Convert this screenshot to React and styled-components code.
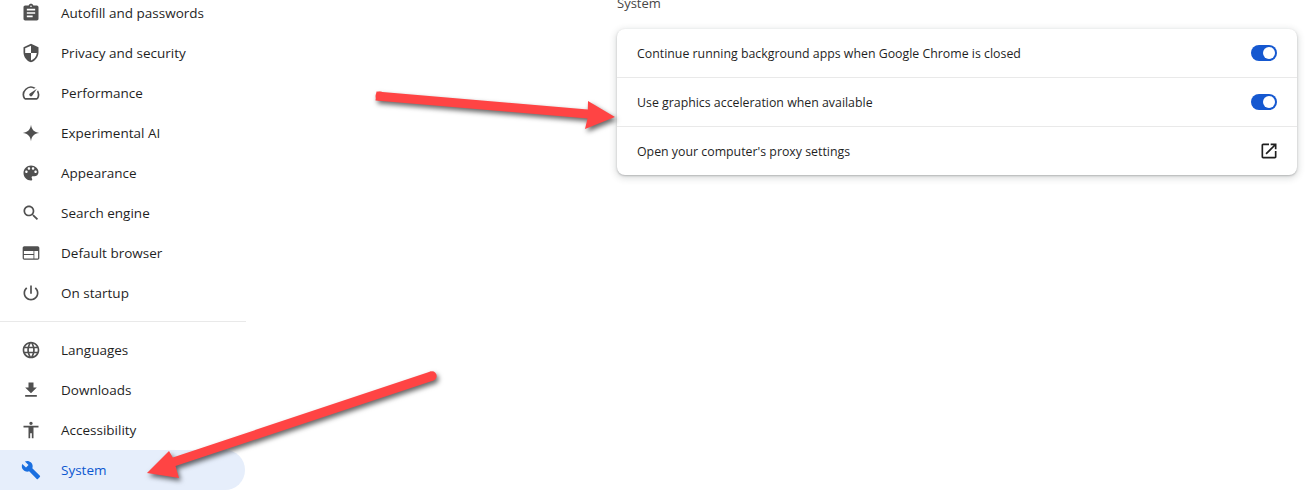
import styled, { createGlobalStyle } from "styled-components";

const GlobalStyle = createGlobalStyle`
	html,
	body {
		margin: 0;
		background: #fff;
	}
	body {
		font-family: "Open Sans", "Noto Sans", sans-serif;
		font-size: 13px;
		color: #1f1f1f;
	}
`;

const icons = {
	autofill:
		"M19 3h-4.18C14.4 1.84 13.3 1 12 1c-1.3 0-2.4.84-2.82 2H5c-1.1 0-2 .9-2 2v14c0 1.1.9 2 2 2h14c1.1 0 2-.9 2-2V5c0-1.1-.9-2-2-2zm-7 0c.55 0 1 .45 1 1s-.45 1-1 1-1-.45-1-1 .45-1 1-1zm2 14H7v-2h7v2zm3-4H7v-2h10v2zm0-4H7V7h10v2z",
	privacy:
		"M12 1L3 5v6c0 5.55 3.84 10.74 9 12 5.16-1.26 9-6.45 9-12V5l-9-4zm0 10.99h7c-.53 4.12-3.28 7.79-7 8.94V12H5V6.3l7-3.11v8.8z",
	performance:
		"M20.38 8.57l-1.23 1.85a8 8 0 0 1-.22 7.58H5.07A8 8 0 0 1 15.58 6.85l1.85-1.23A10 10 0 0 0 3.35 19a2 2 0 0 0 1.72 1h13.85a2 2 0 0 0 1.74-1 10 10 0 0 0-.27-10.44zm-9.79 6.84a2 2 0 0 0 2.83 0l5.66-8.49-8.49 5.66a2 2 0 0 0 0 2.83z",
	spark: "M12 2.2C12.8 8.2 15.8 11.2 21.8 12 15.8 12.8 12.8 15.8 12 21.8 11.2 15.8 8.2 12.8 2.2 12 8.2 11.2 11.2 8.2 12 2.2z",
	palette:
		"M12 3c-4.97 0-9 4.03-9 9s4.03 9 9 9c.83 0 1.5-.67 1.5-1.5 0-.39-.15-.74-.39-1.01-.23-.26-.38-.61-.38-.99 0-.83.67-1.5 1.5-1.5H16c2.76 0 5-2.24 5-5 0-4.42-4.03-8-9-8zm-5.5 9c-.83 0-1.5-.67-1.5-1.5S5.67 9 6.5 9 8 9.67 8 10.5 7.33 12 6.5 12zm3-4C8.67 8 8 7.33 8 6.5S8.67 5 9.5 5s1.5.67 1.5 1.5S10.33 8 9.5 8zm5 0c-.83 0-1.5-.67-1.5-1.5S13.67 5 14.5 5s1.5.67 1.5 1.5S15.33 8 14.5 8zm3 4c-.83 0-1.5-.67-1.5-1.5S16.67 9 17.5 9s1.5.67 1.5 1.5-.67 1.5-1.5 1.5z",
	search:
		"M15.5 14h-.79l-.28-.27C15.41 12.59 16 11.11 16 9.5 16 5.91 13.09 3 9.5 3S3 5.91 3 9.5 5.91 16 9.5 16c1.61 0 3.09-.59 4.23-1.57l.27.28v.79l5 4.99L20.49 19l-4.99-5zm-6 0C7.01 14 5 11.99 5 9.5S7.01 5 9.5 5 14 7.01 14 9.5 11.99 14 9.5 14z",
	browser:
		"M20 4H4c-1.1 0-2 .9-2 2v12c0 1.1.9 2 2 2h16c1.1 0 2-.9 2-2V6c0-1.1-.9-2-2-2zM3.5 9.5H15v3.8H3.5V9.5zm0 8.5v-3.7H15V18.5H3.5zm16.9.5H16V9.5h4.5v9z",
	startup:
		"M13 3h-2v10h2V3zm4.83 2.17l-1.42 1.42C17.99 7.86 19 9.81 19 12c0 3.87-3.13 7-7 7s-7-3.13-7-7c0-2.19 1.01-4.14 2.58-5.42L6.17 5.17C4.23 6.82 3 9.26 3 12c0 4.97 4.03 9 9 9s9-4.03 9-9c0-2.74-1.23-5.18-3.17-6.83z",
	languages:
		"M11.99 2C6.47 2 2 6.48 2 12s4.47 10 9.99 10C17.52 22 22 17.52 22 12S17.52 2 11.99 2zm6.93 6h-2.95c-.32-1.25-.78-2.45-1.38-3.56 1.84.63 3.37 1.91 4.33 3.56zM12 4.04c.83 1.2 1.48 2.53 1.91 3.96h-3.82c.43-1.43 1.08-2.76 1.91-3.96zM4.26 14C4.1 13.36 4 12.69 4 12s.1-1.36.26-2h3.38c-.08.66-.14 1.32-.14 2 0 .68.06 1.34.14 2H4.26zm.82 2h2.95c.32 1.25.78 2.45 1.38 3.56-1.84-.63-3.37-1.9-4.33-3.56zm2.95-8H5.08c.96-1.66 2.49-2.93 4.33-3.56C8.81 5.55 8.35 6.75 8.03 8zM12 19.96c-.83-1.2-1.48-2.53-1.91-3.96h3.82c-.43 1.43-1.08 2.76-1.91 3.96zM14.34 14H9.66c-.09-.66-.16-1.32-.16-2 0-.68.07-1.35.16-2h4.68c.09.65.16 1.32.16 2 0 .68-.07 1.34-.16 2zm.25 5.56c.6-1.11 1.06-2.31 1.38-3.56h2.95c-.96 1.65-2.49 2.93-4.33 3.56zM16.36 14c.08-.66.14-1.32.14-2 0-.68-.06-1.34-.14-2h3.38c.16.64.26 1.31.26 2s-.1 1.36-.26 2h-3.38z",
	downloads: "M19 9h-4V3H9v6H5l7 7 7-7zM5 18v2h14v-2H5z",
	accessibility:
		"M12 2c1.1 0 2 .9 2 2s-.9 2-2 2-2-.9-2-2 .9-2 2-2zm9 7h-6v13h-2v-6h-2v6H9V9H3V7h18v2z",
	system:
		"M22.7 19l-9.1-9.1c.9-2.3.4-5-1.5-6.9-2-2-5-2.4-7.4-1.3L9 6 6 9 1.6 4.7C.4 7.1.9 10.1 2.9 12.1c1.9 1.9 4.6 2.4 6.9 1.5l9.1 9.1c.4.4 1 .4 1.4 0l2.3-2.3c.5-.4.5-1.1.1-1.4z",
	external:
		"M19 19H5V5h7V3H5c-1.11 0-2 .9-2 2v14c0 1.1.89 2 2 2h14c1.1 0 2-.9 2-2v-7h-2v7zM14 3v2h3.59l-9.83 9.83 1.41 1.41L19 6.41V10h2V3h-7z"
};

const topItems = [
	["autofill", "Autofill and passwords"],
	["privacy", "Privacy and security"],
	["performance", "Performance"],
	["spark", "Experimental AI"],
	["palette", "Appearance"],
	["search", "Search engine"],
	["browser", "Default browser"],
	["startup", "On startup"]
];

const bottomItems = [
	["languages", "Languages"],
	["downloads", "Downloads"],
	["accessibility", "Accessibility"],
	["system", "System", true]
];

const Icon = ({ name, className }) => (
	<IconSvg className={className} viewBox='0 0 24 24' fill='currentColor'>
		<path fillRule='evenodd' d={icons[name]} />
	</IconSvg>
);

const NavItem = ({ icon, label, active }) => (
	<NavRow $active={active}>
		<Icon name={icon} />
		<span>{label}</span>
	</NavRow>
);

const App = () => {
	return (
		<Page>
			<GlobalStyle />
			<Sidebar>
				{topItems.map(([icon, label]) => (
					<NavItem key={label} icon={icon} label={label} />
				))}
				<NavDivider />
				{bottomItems.map(([icon, label, active]) => (
					<NavItem key={label} icon={icon} label={label} active={active} />
				))}
			</Sidebar>
			<Main>
				<Heading>System</Heading>
				<Card>
					<CardRow>
						<span>Continue running background apps when Google Chrome is closed</span>
						<Toggle />
					</CardRow>
					<CardRow>
						<span>Use graphics acceleration when available</span>
						<Toggle />
					</CardRow>
					<CardRow>
						<span>Open your computer's proxy settings</span>
						<ExternalIcon name='external' />
					</CardRow>
				</Card>
			</Main>
			<Arrows viewBox='0 0 1311 498'>
				<Arrow points='376.5,91.5 375.5,100.5 587.5,118.5 585,129 615,117 588,101 587.8,109.5' />
				<ArrowTail cx='380' cy='96' r='4.5' />
				<Arrow points='430.5,371.5 433.5,380.5 175.5,466 179,478 147,473 169,451 172.8,457.5' />
				<ArrowTail cx='432' cy='376' r='4.7' />
			</Arrows>
		</Page>
	);
};

const Page = styled.div`
	position: relative;
	display: flex;
	height: 505px;
	margin-top: -7px;
	overflow: hidden;
`;

const Sidebar = styled.nav`
	flex: none;
	width: 246px;
`;

const NavRow = styled.div`
	display: flex;
	align-items: center;
	gap: 20px;
	height: 40px;
	width: 245px;
	padding-left: 21px;
	box-sizing: border-box;
	font-size: 13.5px;
	font-weight: 500;
	border-radius: 0 20px 20px 0;
	color: ${(p) => (p.$active ? "#0b57d0" : "#1f1f1f")};
	background: ${(p) => (p.$active ? "#e6eefb" : "transparent")};

	svg {
		color: ${(p) => (p.$active ? "#1a6fe0" : "#505050")};
	}
`;

const NavDivider = styled.div`
	height: 1px;
	margin: 8px 0;
	background: #e9e9e9;
`;

const IconSvg = styled.svg`
	flex: none;
	width: 20px;
	height: 20px;
`;

const Main = styled.main`
	flex: none;
	width: 680px;
	margin-left: 371px;
`;

const Heading = styled.h2`
	margin: 0 0 16px;
	font-size: 13px;
	font-weight: 400;
	line-height: 20px;
	color: #474747;
`;

const Card = styled.section`
	border-radius: 8px;
	background: #fff;
	box-shadow: 0 1px 2px rgba(60, 64, 67, 0.3), 0 2px 6px 2px rgba(60, 64, 67, 0.15);
`;

const CardRow = styled.div`
	display: flex;
	align-items: center;
	justify-content: space-between;
	height: 48px;
	padding: 0 20px;
	font-size: 12.35px;
	border-top: 1px solid #e9e9e9;

	&:first-child {
		border-top: none;
	}
`;

const Toggle = styled.span`
	position: relative;
	width: 26px;
	height: 16px;
	border-radius: 8px;
	background: #1558d0;

	&::after {
		content: "";
		position: absolute;
		top: 2px;
		right: 2px;
		width: 12px;
		height: 12px;
		border-radius: 50%;
		background: #fff;
	}
`;

const ExternalIcon = styled(Icon)`
	margin-right: -2px;
	color: #1f1f1f;
`;

const Arrows = styled.svg`
	position: absolute;
	top: 0;
	left: 0;
	width: 1311px;
	height: 498px;
	margin-top: 7px;
	pointer-events: none;
	filter: drop-shadow(2px 3px 2.5px rgba(0, 0, 0, 0.6));
`;

const Arrow = styled.polygon`
	fill: #ff4444;
`;

const ArrowTail = styled.circle`
	fill: #ff4444;
`;

export default App;
